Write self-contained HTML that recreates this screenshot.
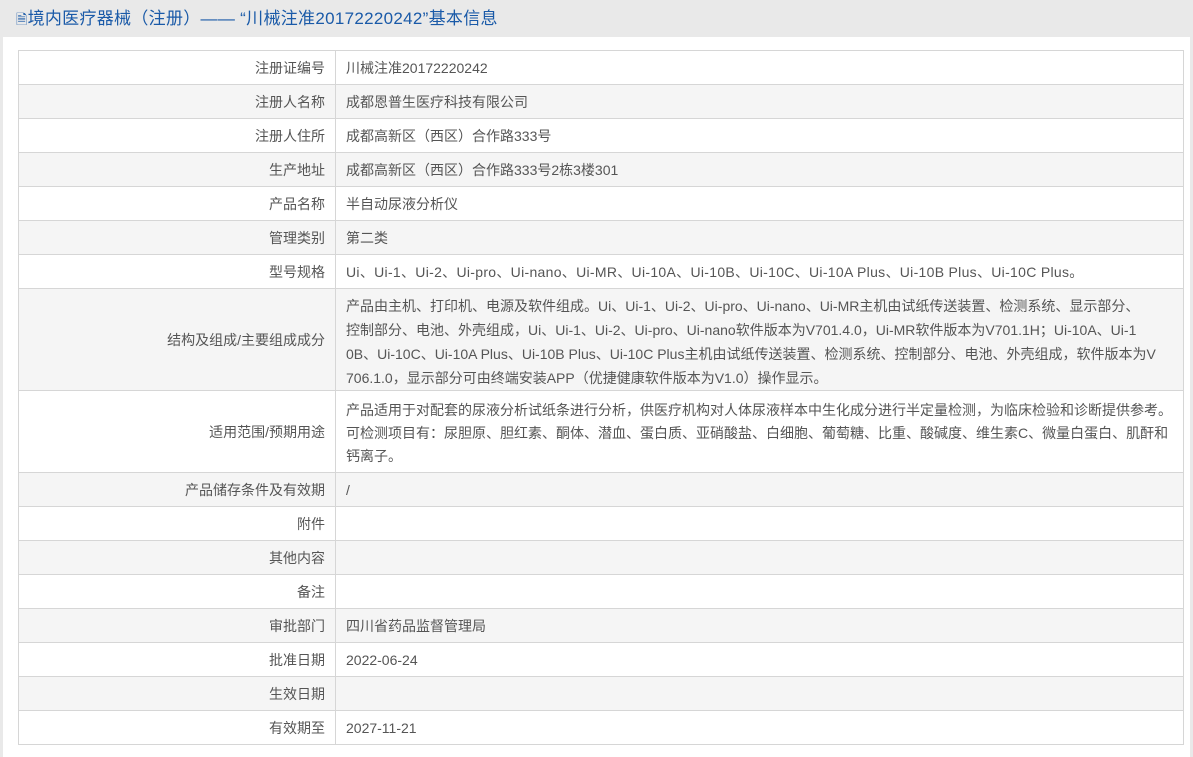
<!DOCTYPE html>
<html><head><meta charset="utf-8"><style>
html,body{margin:0;padding:0;background:#e9e9e9;width:1193px;height:745px;overflow:hidden;}
body{font-family:"Liberation Sans","Noto Sans CJK SC",sans-serif;font-size:14px;color:#555;}
.hd{height:37px;line-height:37px;padding-left:16px;font-size:17px;color:#1a5aa8;white-space:nowrap;letter-spacing:0.3px;}
.wrap{position:absolute;left:3px;top:37px;width:1187px;height:720px;background:#fff;}
table{position:absolute;left:15px;top:13px;width:1166px;border-collapse:collapse;table-layout:fixed;}
td{border:1px solid #d6d6d6;height:33px;padding:0 10px;line-height:24px;box-sizing:border-box;}
td.l{width:317px;text-align:right;}
tr:nth-child(even) td{background:#f5f5f5;}
td.m{padding:4px 10px 5px;}
</style></head><body>
<div class="hd"><span style="font-size:14px">&#128462;</span>境内医疗器械（注册）—— “川械注准20172220242”基本信息</div>
<div class="wrap"><table>
<tr><td class="l" style="height:34px">注册证编号</td><td>川械注准20172220242</td></tr>
<tr><td class="l" style="height:34px">注册人名称</td><td>成都恩普生医疗科技有限公司</td></tr>
<tr><td class="l" style="height:34px">注册人住所</td><td>成都高新区（西区）合作路333号</td></tr>
<tr><td class="l" style="height:34px">生产地址</td><td>成都高新区（西区）合作路333号2栋3楼301</td></tr>
<tr><td class="l" style="height:34px">产品名称</td><td>半自动尿液分析仪</td></tr>
<tr><td class="l" style="height:34px">管理类别</td><td>第二类</td></tr>
<tr><td class="l" style="height:34px">型号规格</td><td style="white-space:nowrap;letter-spacing:0.3px">Ui、Ui-1、Ui-2、Ui-pro、Ui-nano、Ui-MR、Ui-10A、Ui-10B、Ui-10C、Ui-10A Plus、Ui-10B Plus、Ui-10C Plus。</td></tr>
<tr><td class="l" style="height:102px">结构及组成/主要组成成分</td><td class="m" style="height:102px;padding:5px 10px 0;vertical-align:top">产品由主机、打印机、电源及软件组成。Ui、Ui-1、Ui-2、Ui-pro、Ui-nano、Ui-MR主机由试纸传送装置、检测系统、显示部分、<br>控制部分、电池、外壳组成，Ui、Ui-1、Ui-2、Ui-pro、Ui-nano软件版本为V701.4.0，Ui-MR软件版本为V701.1H；Ui-10A、Ui-1<br>0B、Ui-10C、Ui-10A Plus、Ui-10B Plus、Ui-10C Plus主机由试纸传送装置、检测系统、控制部分、电池、外壳组成，软件版本为V<br>706.1.0，显示部分可由终端安装APP（优捷健康软件版本为V1.0）操作显示。</td></tr>
<tr><td class="l" style="height:82px">适用范围/预期用途</td><td class="m" style="height:82px;padding:8px 10px 0;vertical-align:top;line-height:23px">产品适用于对配套的尿液分析试纸条进行分析，供医疗机构对人体尿液样本中生化成分进行半定量检测，为临床检验和诊断提供参考。<br>可检测项目有：尿胆原、胆红素、酮体、潜血、蛋白质、亚硝酸盐、白细胞、葡萄糖、比重、酸碱度、维生素C、微量白蛋白、肌酐和<br>钙离子。</td></tr>
<tr><td class="l" style="height:34px">产品储存条件及有效期</td><td>/</td></tr>
<tr><td class="l" style="height:34px">附件</td><td></td></tr>
<tr><td class="l" style="height:34px">其他内容</td><td></td></tr>
<tr><td class="l" style="height:34px">备注</td><td></td></tr>
<tr><td class="l" style="height:34px">审批部门</td><td>四川省药品监督管理局</td></tr>
<tr><td class="l" style="height:34px">批准日期</td><td>2022-06-24</td></tr>
<tr><td class="l" style="height:34px">生效日期</td><td></td></tr>
<tr><td class="l" style="height:34px">有效期至</td><td>2027-11-21</td></tr>
</table></div>
</body></html>
